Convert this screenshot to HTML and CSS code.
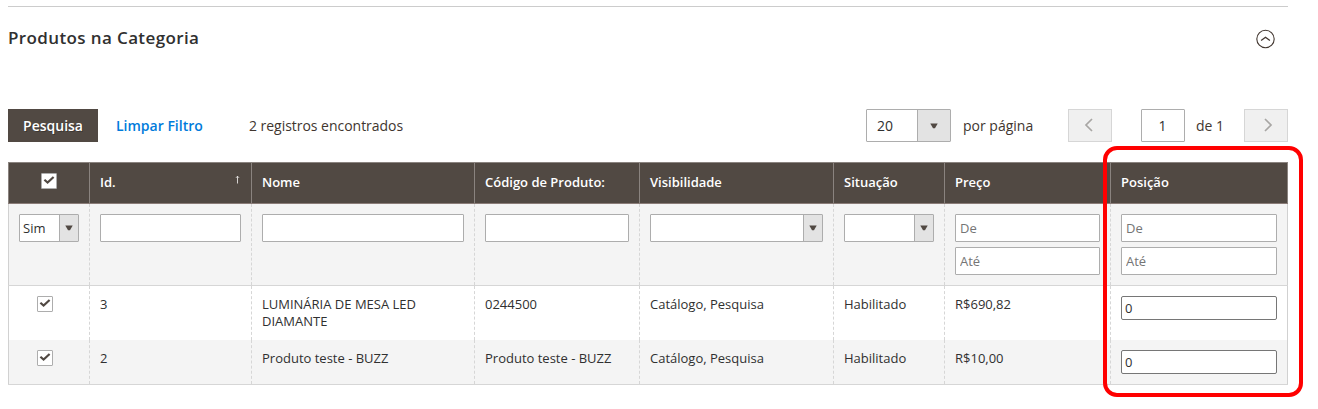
FILE: index.html
```html
<!DOCTYPE html>
<html lang="pt-BR">
<head>
<meta charset="utf-8">
<title>Produtos na Categoria</title>
<link rel="stylesheet" href="styles.css">
</head>
<body>
<svg width="0" height="0" class="defs" aria-hidden="true">
  <symbol id="check" viewBox="0 0 14 14"><path d="M2.4 5.7 L5.6 8.6 L11.6 3" fill="none" stroke="#514943" stroke-width="2.2"/></symbol>
  <symbol id="caret" viewBox="0 0 8 6"><path d="M0.3 0.5h7.4L5 5.3H3z" fill="#514943"/></symbol>
</svg>
<section class="panel">
  <header class="panel-head">
    <h2>Produtos na Categoria</h2>
    <svg class="collapse" width="20" height="20" viewBox="0 0 20 20" fill="none" stroke="#41362f"><circle cx="10.5" cy="10" r="8.7" stroke-width="1.1"/><path d="M6.1 11.5 L10.5 8.2 L14.9 11.5" stroke-width="1.3"/></svg>
  </header>
  <div class="toolbar">
    <button class="search">Pesquisa</button>
    <a class="reset">Limpar Filtro</a>
    <span class="total">2 registros encontrados</span>
    <div class="pager">
      <div class="select limit"><span>20</span><i><svg width="8" height="6"><use href="#caret"/></svg></i></div>
      <span class="per">por página</span>
      <div class="nav"><svg width="10" height="14" viewBox="0 0 10 14"><path d="M8 1 L2 7 L8 13"/></svg></div>
      <input class="page" value="1">
      <span class="of">de 1</span>
      <div class="nav"><svg width="10" height="14" viewBox="0 0 10 14"><path d="M2 1 L8 7 L2 13"/></svg></div>
    </div>
  </div>
  <div class="table">
    <div class="row head">
      <div class="mark"><span class="box"><svg width="14" height="14"><use href="#check"/></svg></span></div>
      <div class="sorted"><span>Id.</span><svg width="5" height="9" viewBox="0 0 5 9"><path d="M2.5 8.5V1M1 2.8L2.5 1.2L4 2.8" fill="none" stroke="#e4e2e0" stroke-width=".9"/></svg></div>
      <div>Nome</div><div>Código de Produto:</div><div>Visibilidade</div><div>Situação</div><div>Preço</div><div>Posição</div>
    </div>
    <div class="row filters">
      <div><div class="select"><span>Sim</span><i><svg width="8" height="6"><use href="#caret"/></svg></i></div></div>
      <div><input></div>
      <div><input></div>
      <div><input></div>
      <div><div class="select"><span></span><i><svg width="8" height="6"><use href="#caret"/></svg></i></div></div>
      <div><div class="select"><span></span><i><svg width="8" height="6"><use href="#caret"/></svg></i></div></div>
      <div><input placeholder="De"><input placeholder="Até"></div>
      <div><input placeholder="De"><input placeholder="Até"></div>
    </div>
    <div class="row first">
      <div class="mark"><span class="box"><svg width="14" height="14"><use href="#check"/></svg></span></div>
      <div>3</div><div>LUMINÁRIA DE MESA LED DIAMANTE</div><div>0244500</div><div>Catálogo, Pesquisa</div><div>Habilitado</div><div>R$690,82</div>
      <div><input class="position" value="0"></div>
    </div>
    <div class="row second">
      <div class="mark"><span class="box"><svg width="14" height="14"><use href="#check"/></svg></span></div>
      <div>2</div><div>Produto teste - BUZZ</div><div>Produto teste - BUZZ</div><div>Catálogo, Pesquisa</div><div>Habilitado</div><div>R$10,00</div>
      <div><input class="position" value="0"></div>
    </div>
  </div>
</section>
<div class="highlight"></div>
</body>
</html>
```
FILE: styles.css
```css
* { box-sizing: border-box; }
body { margin: 0; background: #fff; color: #303030; font: 13px/17px "Open Sans", sans-serif; height: 409px; overflow: hidden; position: relative; }
.defs { position: absolute; }
.panel { width: 1280px; margin: 6px 0 0 8px; border-top: 1px solid #ccc; }
.panel-head { height: 102px; padding: 19px 13px 0 0; display: flex; justify-content: space-between; align-items: flex-start; }
h2 { margin: 0; font-size: 17px; line-height: 24px; font-weight: 600; letter-spacing: .38px; }
.collapse { margin-top: 3px; }
.toolbar { height: 33px; display: flex; align-items: center; font-size: 14px; color: #41362f; }
.search { width: 90px; height: 33px; padding: 0; border: 0; background: #514943; color: #fff; font: 600 14px/33px "Open Sans", sans-serif; text-shadow: 1px 1px 0 rgba(0,0,0,.25); }
.reset { margin-left: 18px; width: 133px; color: #007bdb; font-weight: 600; }
.total { letter-spacing: -.03px; }
.pager { margin-left: auto; display: flex; align-items: center; }
.select { display: flex; width: 100%; height: 28px; border: 1px solid #adadad; border-radius: 1px; background: #fff; }
.select span { flex: 1; padding-left: 3px; line-height: 26px; }
.select i { width: 19px; border-left: 1px solid #adadad; background: #e3e3e3; display: flex; align-items: center; justify-content: center; }
.limit { width: 85px; height: 33px; color: #303030; }
.limit span { padding-left: 10px; line-height: 32px; }
.limit i { width: 33px; }
.per { margin-left: 12px; width: 105px; }
.nav { width: 44px; height: 33px; display: flex; align-items: center; justify-content: center; border: 1px solid #d6d6d6; background: #f0f0f0; padding: 0 3px 2px 0; }
.nav svg { fill: none; stroke: #a8a6a4; stroke-width: 1.7; }
.of + .nav { padding: 0 0 2px 3px; }
.page { margin-left: 29px; width: 44px; height: 33px; padding: 0 5px 0 4px; text-align: center; font-size: 14px; }
.of { margin-left: 11px; width: 48px; }
input { display: block; width: 100%; height: 28px; margin: 0 0 5px; padding: 0 4px; border: 1px solid #adadad; border-radius: 1px; background: #fff; color: #303030; font: 13px/17px "Open Sans", sans-serif; }
.pager .page { margin-bottom: 0; padding: 0 5px 0 4px; font-size: 14px; }
input::placeholder { color: #757575; opacity: 1; }
.table { margin-top: 20px; }
.row { display: grid; grid-template-columns: 81px 162px 223px 165px 194px 111px 166px 178px; }
.row > div { border-left: 1px dashed #d6d6d6; padding: 10px 10px 0; }
.row > div:first-child { border-left: 1px solid #d1d1d1; }
.row > div:last-child { border-right: 1px solid #d1d1d1; }
.head { height: 42px; background: #514943; color: #fff; font-weight: 600; border-top: 1px solid #8a837f; border-bottom: 1px solid #8a7c78; }
.row.head > div { border-left: 1px solid #8a837f; padding-top: 11px; }
.row.head > div:last-child { border-right: 1px solid #8a837f; }
.sorted { display: flex; justify-content: space-between; }
.sorted svg { margin: 1px 1px 0 0; }
.filters { height: 82px; background: #f4f4f4; border-bottom: 1px solid #d6d6d6; }
.first { height: 54px; }
.second { height: 45px; background: #f4f4f4; border-bottom: 1px solid #d6d6d6; }
.mark { display: flex; justify-content: center; }
.row:not(.head) .mark { padding-right: 18px; }
.box { width: 16px; height: 16px; border: 1px solid #adadad; border-radius: 1px; background: #fff; display: flex; }
.head .box { margin-top: -1px; }
.position { height: 24px; padding: 0 3px; border-color: #767676; border-radius: 2px; }
.highlight { position: absolute; left: 1103px; top: 146px; width: 200px; height: 251px; border: 4px solid #f00; border-radius: 14px; }
```
